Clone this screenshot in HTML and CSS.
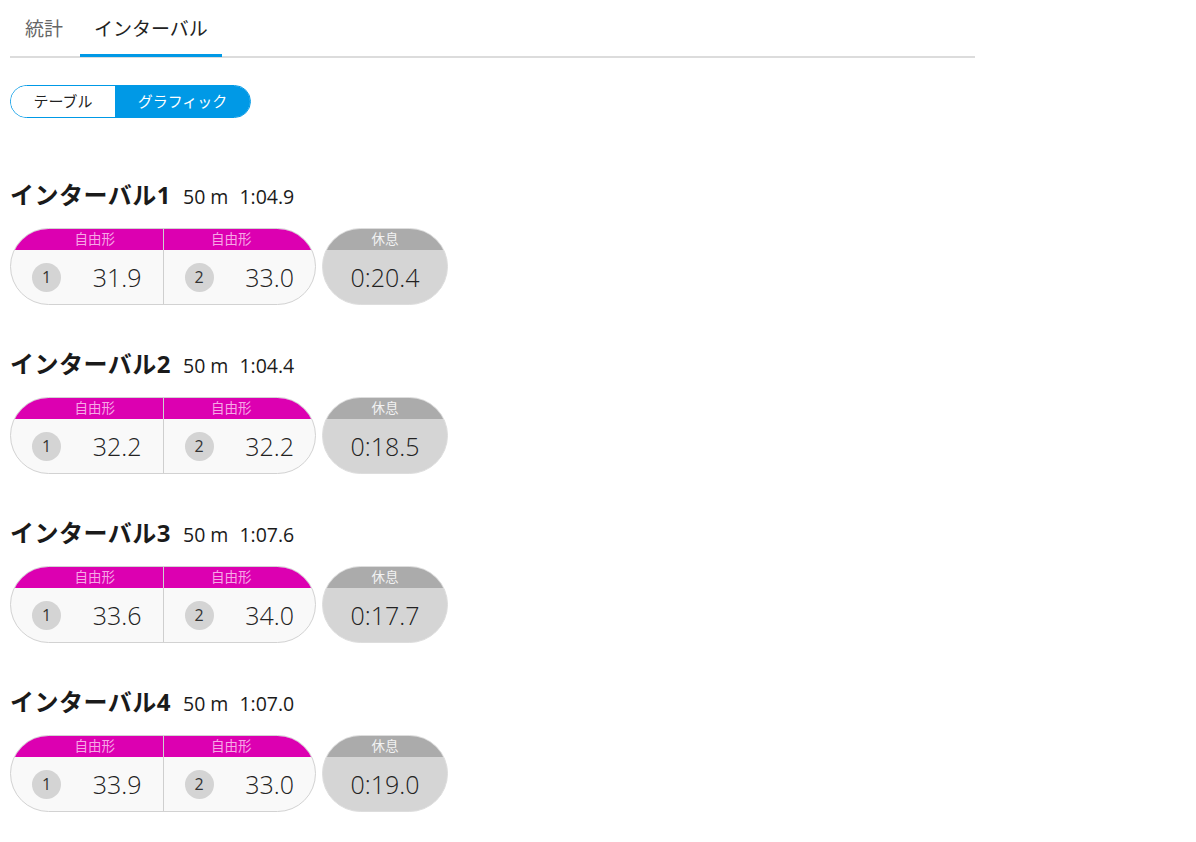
FILE: index.html
```html
<!DOCTYPE html>
<html lang="ja">
<head>
<meta charset="utf-8">
<link rel="stylesheet" href="styles.css">
</head>
<body>
<div class="page">
  <div class="tabs">
    <div class="tab">統計</div>
    <div class="tab active">インターバル</div>
  </div>
  <div class="toggle">
    <div class="toggle-item">テーブル</div>
    <div class="toggle-item on">グラフィック</div>
  </div>

  <div class="intervals">
    <section class="interval">
      <h2 class="title">インターバル1<span class="meta">50 m</span><span class="meta">1:04.9</span></h2>
      <div class="row">
        <div class="laps">
          <div class="lap"><div class="lap-head">自由形</div><div class="lap-body"><span class="badge">1</span><span class="num">31.9</span></div></div>
          <div class="lap"><div class="lap-head">自由形</div><div class="lap-body"><span class="badge">2</span><span class="num">33.0</span></div></div>
        </div>
        <div class="rest"><div class="rest-head">休息</div><div class="rest-body">0:20.4</div></div>
      </div>
    </section>

    <section class="interval">
      <h2 class="title">インターバル2<span class="meta">50 m</span><span class="meta">1:04.4</span></h2>
      <div class="row">
        <div class="laps">
          <div class="lap"><div class="lap-head">自由形</div><div class="lap-body"><span class="badge">1</span><span class="num">32.2</span></div></div>
          <div class="lap"><div class="lap-head">自由形</div><div class="lap-body"><span class="badge">2</span><span class="num">32.2</span></div></div>
        </div>
        <div class="rest"><div class="rest-head">休息</div><div class="rest-body">0:18.5</div></div>
      </div>
    </section>

    <section class="interval">
      <h2 class="title">インターバル3<span class="meta">50 m</span><span class="meta">1:07.6</span></h2>
      <div class="row">
        <div class="laps">
          <div class="lap"><div class="lap-head">自由形</div><div class="lap-body"><span class="badge">1</span><span class="num">33.6</span></div></div>
          <div class="lap"><div class="lap-head">自由形</div><div class="lap-body"><span class="badge">2</span><span class="num">34.0</span></div></div>
        </div>
        <div class="rest"><div class="rest-head">休息</div><div class="rest-body">0:17.7</div></div>
      </div>
    </section>

    <section class="interval">
      <h2 class="title">インターバル4<span class="meta">50 m</span><span class="meta">1:07.0</span></h2>
      <div class="row">
        <div class="laps">
          <div class="lap"><div class="lap-head">自由形</div><div class="lap-body"><span class="badge">1</span><span class="num">33.9</span></div></div>
          <div class="lap"><div class="lap-head">自由形</div><div class="lap-body"><span class="badge">2</span><span class="num">33.0</span></div></div>
        </div>
        <div class="rest"><div class="rest-head">休息</div><div class="rest-body">0:19.0</div></div>
      </div>
    </section>
  </div>
</div>
</body>
</html>
```

FILE: styles.css
```css
* { box-sizing: border-box; }
html, body { margin: 0; padding: 0; background: #fff; }
body {
  font-family: "Open Sans", "Noto Sans CJK JP", sans-serif;
  color: #222;
}
.page {
  padding: 0 0 0 10px;
  width: 975px;
}
.tabs {
  display: flex;
  border-bottom: 2px solid #dcdcdc;
  height: 58px;
}
.tab {
  font-size: 19px;
  line-height: 24px;
  padding: 17px 15px 0 15px;
  color: #666;
  height: 57px;
  margin-bottom: -1px;
}
.tab.active {
  color: #222;
  border-bottom: 3px solid #0099e6;
  padding: 17px 14px 0 14px;
  margin-left: 2px;
}
.toggle {
  margin-top: 27px;
  display: inline-flex;
  height: 33px;
  border: 1px solid #0099e6;
  border-radius: 17px;
  overflow: hidden;
}
.toggle-item {
  font-size: 15px;
  line-height: 31px;
  color: #222;
  width: 104px;
  text-align: center;
  background: #fff;
}
.toggle-item.on {
  background: #0099e6;
  color: #fff;
  width: 135px;
}
.intervals {
  margin-top: 62px;
  display: flex;
  flex-direction: column;
  gap: 44px;
}
.title {
  margin: 0;
  font-size: 24px;
  font-weight: 700;
  line-height: 30px;
  height: 30px;
  color: #1a1a1a;
  display: flex;
  align-items: baseline;
  letter-spacing: 0.5px;
}
.meta {
  font-size: 19.5px;
  font-weight: 400;
  margin-left: 12px;
  letter-spacing: 0;
}
.meta + .meta { margin-left: 11px; }
.row {
  margin-top: 18px;
  display: flex;
  gap: 6px;
}
.laps {
  display: flex;
  width: 306px;
  height: 77px;
  border: 1px solid #d2d2d2;
  border-radius: 39px;
  overflow: hidden;
  background: #f9f9f9;
}
.lap {
  flex: 1;
  display: flex;
  flex-direction: column;
}
.lap + .lap { border-left: 1px solid #cfcfcf; }
.lap-head {
  height: 21px;
  background: #dc00b1;
  color: #f6a6e6;
  font-size: 13.5px;
  line-height: 21px;
  text-align: center;
}
.lap:first-child .lap-head { padding-left: 16px; }
.lap:last-child .lap-head { padding-right: 16px; }
.lap-body {
  flex: 1;
  display: flex;
  align-items: center;
  justify-content: space-between;
  padding: 0 21px 0 21px;
}
.badge {
  width: 29px;
  height: 29px;
  border-radius: 50%;
  background: #d4d4d4;
  font-size: 16px;
  font-weight: 400;
  line-height: 29px;
  text-align: center;
  color: #333;
}
.num {
  font-size: 25px;
  font-weight: 300;
  color: #222;
}
.rest {
  width: 126px;
  height: 77px;
  border: 1px solid #dddddd;
  border-radius: 39px;
  overflow: hidden;
  background: #d5d5d5;
  display: flex;
  flex-direction: column;
}
.rest-head {
  height: 21px;
  background: #ababab;
  color: #f2f2f2;
  font-size: 13.5px;
  line-height: 21px;
  text-align: center;
}
.rest-body {
  flex: 1;
  display: flex;
  align-items: center;
  justify-content: center;
  font-size: 25px;
  font-weight: 300;
}
```
